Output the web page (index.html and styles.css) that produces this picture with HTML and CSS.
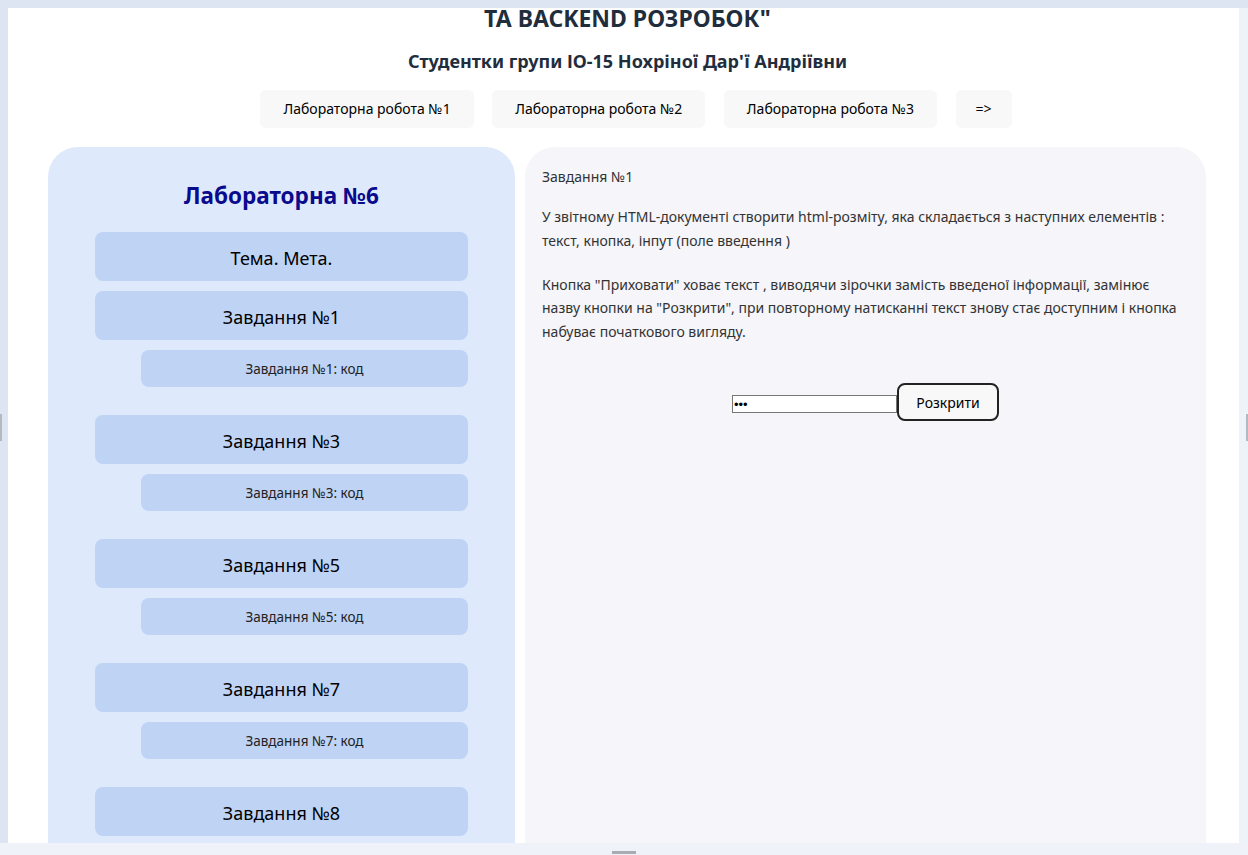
FILE: index.html
```html
<!DOCTYPE html>
<html lang="uk">
<head>
<meta charset="utf-8">
<title>Лабораторна №6</title>
<link rel="stylesheet" href="styles.css">
</head>
<body>
<div class="shell">
  <div class="strip-top"></div>
  <div class="middle">
    <div class="side side-left"><span class="thumb-v"></span></div>
    <div class="frame">
      <header class="header">
        <h1 class="title">ТА BACKEND РОЗРОБОК"</h1>
        <h2 class="subtitle">Студентки групи ІО-15 Нохріної Дар'ї Андріївни</h2>
        <nav class="nav">
          <a class="nav-btn">Лабораторна робота №1</a>
          <a class="nav-btn">Лабораторна робота №2</a>
          <a class="nav-btn">Лабораторна робота №3</a>
          <a class="nav-btn nav-next">=&gt;</a>
        </nav>
      </header>
      <main class="content">
        <aside class="menu">
          <h3 class="menu-title">Лабораторна №6</h3>
          <div class="menu-item">Тема. Мета.</div>
          <div class="menu-item">Завдання №1</div>
          <div class="menu-sub">Завдання №1: код</div>
          <div class="menu-item">Завдання №3</div>
          <div class="menu-sub">Завдання №3: код</div>
          <div class="menu-item">Завдання №5</div>
          <div class="menu-sub">Завдання №5: код</div>
          <div class="menu-item">Завдання №7</div>
          <div class="menu-sub">Завдання №7: код</div>
          <div class="menu-item">Завдання №8</div>
        </aside>
        <section class="task">
          <p class="task-title">Завдання №1</p>
          <p class="task-text">У звітному HTML-документі створити html-розміту, яка складається з наступних елементів : текст, кнопка, інпут (поле введення )</p>
          <p class="task-text">Кнопка "Приховати" ховає текст , виводячи зірочки замість введеної інформації, замінює назву кнопки на "Розкрити", при повторному натисканні текст знову стає доступним і кнопка набуває початкового вигляду.</p>
          <div class="demo">
            <input class="demo-input" type="password" value="abc">
            <button class="demo-btn" type="button">Розкрити</button>
          </div>
        </section>
      </main>
    </div>
    <div class="side side-right"><span class="thumb-v"></span></div>
  </div>
  <div class="strip-bottom"><span class="thumb-h"></span></div>
</div>
</body>
</html>
```

FILE: styles.css
```css
html, body {
  margin: 0;
  padding: 0;
  height: 100%;
  overflow: hidden;
}
body {
  background: #dde4f2;
  font-family: "Noto Sans", "Open Sans", sans-serif;
  color: #000;
}
.shell {
  display: flex;
  flex-direction: column;
  width: 1248px;
  height: 855px;
}
.strip-top {
  height: 8px;
  flex: none;
  background: #dde4f2;
}
.middle {
  display: flex;
  height: 835px;
  flex: none;
}
.side {
  flex: none;
  display: flex;
  align-items: center;
}
.side-left {
  width: 8px;
  background: #dde4f2;
  justify-content: flex-start;
}
.side-right {
  width: 9px;
  background: #eef2f9;
  justify-content: flex-end;
}
.thumb-v {
  display: block;
  width: 2px;
  height: 27px;
  background: #b4b8c0;
  margin-top: 4px;
}
.strip-bottom {
  height: 12px;
  flex: none;
  background: #eff2f8;
  display: flex;
  justify-content: center;
  align-items: flex-end;
}
.thumb-h {
  display: block;
  width: 24px;
  height: 3px;
  background: #a9acb2;
  margin-bottom: 1px;
}
.frame {
  width: 1231px;
  flex: none;
  background: #fff;
  overflow: hidden;
}
.header {
  text-align: center;
  color: #1f2d3d;
  padding-left: 8px;
}
.title {
  margin: 0;
  font-size: 23px;
  line-height: 20px;
  font-weight: 700;
}
.subtitle {
  margin: 21px 0 0;
  font-size: 18px;
  line-height: 24px;
  font-weight: 700;
}
.nav {
  display: flex;
  justify-content: center;
  gap: 18.5px;
  margin-top: 17px;
  padding-left: 17px;
}
.nav-btn {
  display: block;
  background: #f8f8f8;
  border-radius: 6px;
  padding: 9px 23px;
  font-size: 14px;
  line-height: 20px;
  color: #000;
}
.nav-next {
  padding: 9px 20px;
}
.content {
  display: flex;
  gap: 10px;
  margin: 19px 0 0 40px;
  width: 1158px;
  align-items: flex-start;
}
.menu {
  width: 373px;
  flex: none;
  background: #dfe9fc;
  border-radius: 30px 30px 0 0;
  padding: 34px 47px 40px;
  display: flex;
  flex-direction: column;
  align-items: flex-end;
}
.menu-title {
  align-self: stretch;
  text-align: center;
  margin: 0 0 21px;
  font-size: 22.5px;
  line-height: 30px;
  font-weight: 700;
  color: #0a0a8c;
}
.menu-item {
  align-self: stretch;
  height: 49px;
  line-height: 52px;
  text-align: center;
  font-size: 18px;
  font-weight: 400;
  background: #bfd3f5;
  border-radius: 8px;
  margin-bottom: 10px;
}
.menu-sub {
  width: 327px;
  height: 37px;
  line-height: 38px;
  text-align: center;
  font-size: 13.5px;
  color: #222;
  background: #bfd3f5;
  border-radius: 8px;
  margin-bottom: 28px;
}
.task {
  flex: 1;
  min-height: 760px;
  background: #f5f5fa;
  border-radius: 30px 30px 0 0;
  padding: 20px 17px;
  font-size: 14px;
  color: #333;
}
.task-title {
  margin: 0 0 18px;
  line-height: 20px;
}
.task-text {
  margin: 0 0 20.5px;
  line-height: 23.5px;
}
.demo {
  margin-top: 40px;
  text-align: center;
  display: flex;
  justify-content: center;
  align-items: center;
}
.demo-input {
  width: 161px;
  height: 14px;
  padding: 1px;
  border: 1px solid #767676;
  font-size: 13px;
  margin: 4px 0 0;
  box-sizing: content-box;
}
.demo-btn {
  width: 102px;
  height: 38px;
  border: 2px solid #222;
  border-radius: 8px;
  background: #f8f8f8;
  font-family: "Noto Sans", "Open Sans", sans-serif;
  font-size: 14px;
  color: #000;
  margin: 0;
  padding: 0;
}
```
